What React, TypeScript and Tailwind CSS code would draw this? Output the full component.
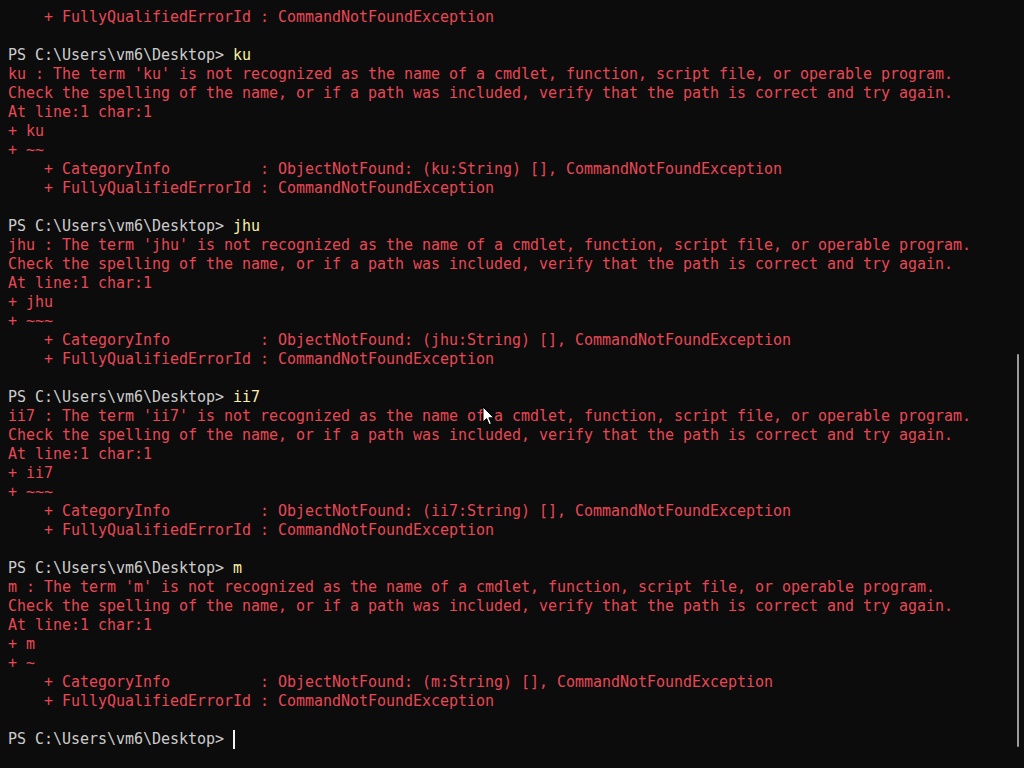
import React from "react";

const prompt = "PS C:\\Users\\vm6\\Desktop> ";

type Row = { text: string; color?: "red" | "gray"; cmd?: string };

function errorBlock(cmd: string): Row[] {
  return [
    { text: prompt, color: "gray", cmd },
    {
      text: `${cmd} : The term '${cmd}' is not recognized as the name of a cmdlet, function, script file, or operable program.`,
      color: "red",
    },
    {
      text: "Check the spelling of the name, or if a path was included, verify that the path is correct and try again.",
      color: "red",
    },
    { text: "At line:1 char:1", color: "red" },
    { text: `+ ${cmd}`, color: "red" },
    { text: `+ ${"~".repeat(cmd.length)}`, color: "red" },
    {
      text: `    + CategoryInfo          : ObjectNotFound: (${cmd}:String) [], CommandNotFoundException`,
      color: "red",
    },
    { text: "    + FullyQualifiedErrorId : CommandNotFoundException", color: "red" },
    { text: "" },
  ];
}

const rows: Row[] = [
  { text: "    + FullyQualifiedErrorId : CommandNotFoundException", color: "red" },
  { text: "" },
  ...errorBlock("ku"),
  ...errorBlock("jhu"),
  ...errorBlock("ii7"),
  ...errorBlock("m"),
];

function MouseArrow() {
  return (
    <svg width="13" height="20" viewBox="0 0 13 20" className="absolute left-[482px] top-[406px]">
      <path
        d="M1 1 L1 16 L4.6 12.6 L7.2 18.6 L9.4 17.6 L6.9 11.8 L11.8 11.8 Z"
        fill="#ffffff"
        stroke="#000000"
        strokeWidth="1"
        strokeLinejoin="round"
      />
    </svg>
  );
}

export default function App() {
  return (
    <div className="relative w-[1024px] h-[768px] overflow-hidden bg-[#0c0c0c]">
      <div
        className="flex flex-col pt-[8px] pl-[8px] text-[15px] leading-[19px] tracking-[-0.03px]"
        style={{ fontFamily: '"DejaVu Sans Mono", "Liberation Mono", monospace' }}
      >
        {rows.map((row, i) => (
          <div
            key={i}
            className={
              "h-[19px] whitespace-pre " +
              (row.color === "red" ? "text-[#e74856]" : "text-[#cccccc]")
            }
          >
            {row.text}
            {row.cmd && <span className="text-[#f9f1a5]">{row.cmd}</span>}
          </div>
        ))}
        <div className="flex h-[19px] items-center whitespace-pre text-[#cccccc]">
          <span>{prompt}</span>
          <span className="w-[2px] h-[19px] bg-[#f2f2f2]" />
        </div>
      </div>

      {/* scrollbar thumb */}
      <div className="absolute left-[1017px] top-[354px] w-[2px] h-[393px] rounded-full bg-[#9b9b9b]" />

      <MouseArrow />
    </div>
  );
}
